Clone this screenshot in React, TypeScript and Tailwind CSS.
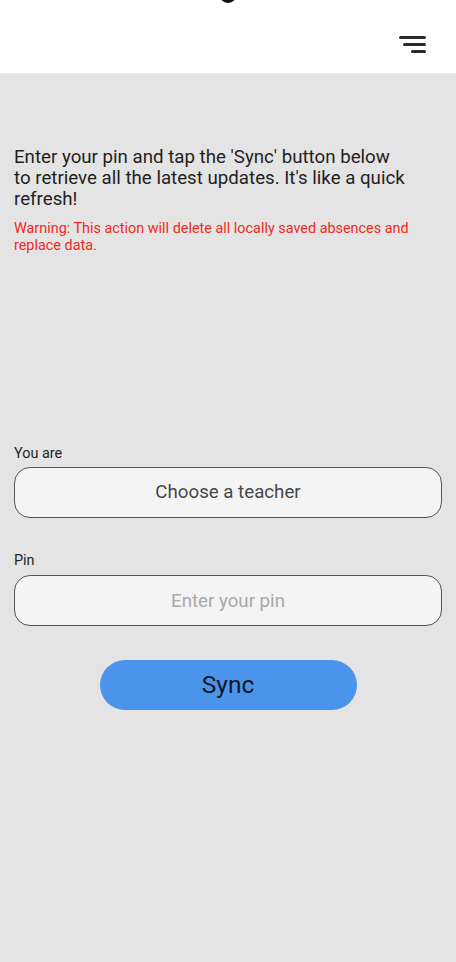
export default function App() {
  return (
    <div
      className="relative min-h-[962px] w-full overflow-hidden bg-[#e4e4e4] text-[#1c1c1c]"
      style={{ fontFamily: "Roboto, 'Noto Sans', sans-serif" }}
    >
      {/* camera dot peeking from the top */}
      <div className="absolute left-[219px] top-[-15px] h-[18px] w-[18px] rounded-full bg-[#111]" />

      <header className="flex h-[74px] items-start justify-end border-b border-[#ececec] bg-white pr-[30px] pt-[36px]">
        <button className="flex w-[28px] flex-col items-end gap-[4px]">
          <span className="h-[3px] w-[27px] rounded-full bg-[#2b2b2b]" />
          <span className="h-[3px] w-[23px] rounded-full bg-[#2b2b2b]" />
          <span className="h-[3px] w-[15px] rounded-full bg-[#2b2b2b]" />
        </button>
      </header>

      <main className="px-[14px] pt-[73px]">
        <p className="text-[18.7px] leading-[21px] text-[#1f1f1f]">
          Enter your pin and tap the 'Sync' button below
          <br />
          to retrieve all the latest updates. It's like a quick refresh!
        </p>
        <p className="mt-[10px] text-[14.4px] leading-[17px] text-[#ef2b22]">
          Warning: This action will delete all locally saved absences and replace data.
        </p>

        <div className="mt-[192px]">
          <label className="block text-[14.4px] leading-[16px] text-[#1f1f1f]">You are</label>
          <button className="mt-[5px] flex h-[51px] w-full items-center justify-center rounded-[16px] border border-[#555] bg-[#f4f4f4] text-[18.7px] text-[#484848]">
            Choose a teacher
          </button>
        </div>

        <div className="mt-[35px]">
          <label className="block text-[14.4px] leading-[16px] text-[#1f1f1f]">Pin</label>
          <input
            placeholder="Enter your pin"
            className="mt-[6px] block h-[51px] w-full rounded-[16px] border border-[#555] bg-[#f4f4f4] text-center text-[18.7px] text-[#484848] outline-none placeholder:text-[#a9a9a9]"
          />
        </div>

        <div className="mt-[34px] flex justify-center">
          <button className="h-[50px] w-[257px] rounded-full bg-[#4a95eb] text-[24.5px] text-[#0f1624]">
            Sync
          </button>
        </div>
      </main>
    </div>
  );
}
